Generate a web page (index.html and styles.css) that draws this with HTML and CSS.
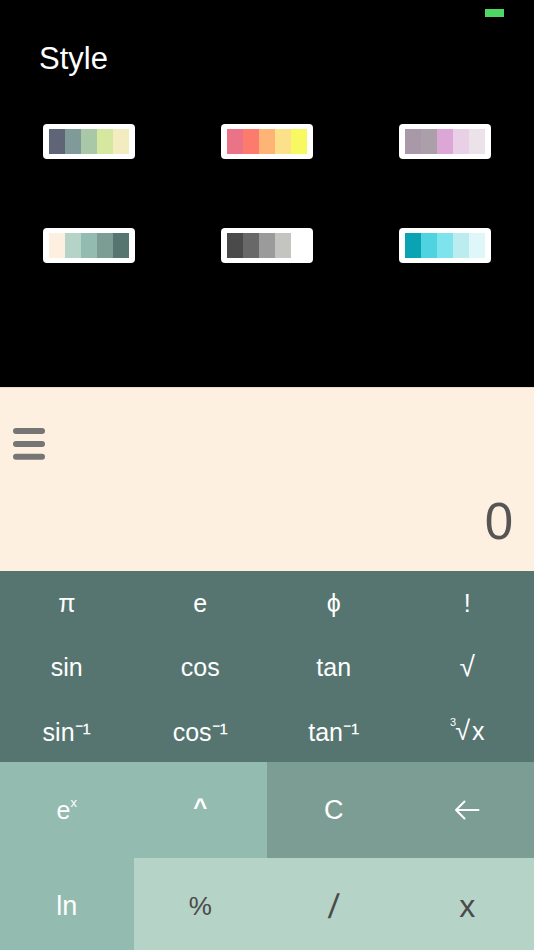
FILE: index.html
```html
<!DOCTYPE html>
<html>
<head>
<meta charset="utf-8">
<link rel="stylesheet" href="styles.css">
</head>
<body>
<div class="app">
  <section class="style-panel">
    <div class="status-bar"><span class="battery"></span></div>
    <h1 class="title">Style</h1>
    <div class="palettes">
      <div class="palette-cell"><div class="palette">
        <span class="sw" style="background:#5f6577"></span><span class="sw" style="background:#7f9a98"></span><span class="sw" style="background:#a8c8a8"></span><span class="sw" style="background:#d6e8a0"></span><span class="sw" style="background:#f2ecc0"></span>
      </div></div>
      <div class="palette-cell"><div class="palette">
        <span class="sw" style="background:#ea7387"></span><span class="sw" style="background:#fd7b6c"></span><span class="sw" style="background:#fdb474"></span><span class="sw" style="background:#fde08a"></span><span class="sw" style="background:#f8f860"></span>
      </div></div>
      <div class="palette-cell"><div class="palette">
        <span class="sw" style="background:#a898a8"></span><span class="sw" style="background:#aba0aa"></span><span class="sw" style="background:#dca6d6"></span><span class="sw" style="background:#ead0e6"></span><span class="sw" style="background:#ece2ea"></span>
      </div></div>
      <div class="palette-cell"><div class="palette">
        <span class="sw" style="background:#fdf0e1"></span><span class="sw" style="background:#b6d3c7"></span><span class="sw" style="background:#93bbb0"></span><span class="sw" style="background:#7c9d93"></span><span class="sw" style="background:#567570"></span>
      </div></div>
      <div class="palette-cell"><div class="palette">
        <span class="sw" style="background:#4a4a4a"></span><span class="sw" style="background:#686868"></span><span class="sw" style="background:#9b9b9b"></span><span class="sw" style="background:#c4c4c0"></span><span class="sw" style="background:#ffffff"></span>
      </div></div>
      <div class="palette-cell"><div class="palette">
        <span class="sw" style="background:#0aa3b4"></span><span class="sw" style="background:#4fd3e0"></span><span class="sw" style="background:#7fe3ee"></span><span class="sw" style="background:#bbecf0"></span><span class="sw" style="background:#e0f7fa"></span>
      </div></div>
    </div>
  </section>

  <section class="display">
    <svg class="menu" width="32" height="32" viewBox="0 0 32 32">
      <rect x="0" y="0" width="32" height="6" rx="3" fill="#757575"/>
      <rect x="0" y="13" width="32" height="6" rx="3" fill="#757575"/>
      <rect x="0" y="25.7" width="32" height="6" rx="3" fill="#757575"/>
    </svg>
    <div class="result">0</div>
  </section>

  <section class="keypad">
    <div class="key sci">π</div>
    <div class="key sci">e</div>
    <div class="key sci">ϕ</div>
    <div class="key sci">!</div>
    <div class="key sci">sin</div>
    <div class="key sci">cos</div>
    <div class="key sci">tan</div>
    <div class="key sci root">√</div>
    <div class="key sci">sin⁻¹</div>
    <div class="key sci">cos⁻¹</div>
    <div class="key sci">tan⁻¹</div>
    <div class="key sci cube"><span class="cube-idx">3</span><span class="cube-rad">√</span><span class="cube-x">x</span></div>
    <div class="key fn">e<sup class="exp">x</sup></div>
    <div class="key fn caret">^</div>
    <div class="key ctl clear">C</div>
    <div class="key ctl">
      <svg class="arrow" width="26" height="20" viewBox="0 0 26 20">
        <path d="M24.5 10 H2 M10.5 1.5 L2 10 L10.5 18.5" fill="none" stroke="#fff" stroke-width="2" stroke-linecap="round" stroke-linejoin="round"/>
      </svg>
    </div>
    <div class="key fn big">ln</div>
    <div class="key op pct">%</div>
    <div class="key op slash"><span class="slash-glyph">/</span></div>
    <div class="key op times">x</div>
  </section>
</div>
</body>
</html>
```

FILE: styles.css
```css
html, body {
  margin: 0;
  padding: 0;
  background: #000;
}
body {
  width: 534px;
  height: 950px;
  overflow: hidden;
  font-family: "Liberation Sans", Arial, sans-serif;
}
.app {
  display: flex;
  flex-direction: column;
}
.style-panel {
  height: 387px;
  background: #000;
  display: flex;
  flex-direction: column;
}
.status-bar {
  height: 26px;
  box-sizing: border-box;
  padding: 9px 30px 0 0;
  display: flex;
  justify-content: flex-end;
}
.battery {
  width: 19px;
  height: 8px;
  background: #4cd964;
}
.title {
  margin: 15px 0 0 0;
  padding-left: 39px;
  font-size: 31px;
  line-height: 36px;
  font-weight: normal;
  color: #fff;
}
.palettes {
  margin-top: 47px;
  display: grid;
  grid-template-columns: repeat(3, 1fr);
  grid-auto-rows: 35px;
  row-gap: 69px;
}
.palette-cell {
  display: flex;
  justify-content: center;
}
.palette {
  width: 92px;
  height: 35px;
  box-sizing: border-box;
  padding: 5px 6px;
  background: #fff;
  border-radius: 4px;
  display: flex;
}
.sw {
  flex: 1;
  height: 100%;
}
.display {
  height: 184px;
  box-sizing: border-box;
  background: #fdf0e1;
  border-top: 1px solid #e8dccd;
  padding: 40px 21px 19px 13px;
  display: flex;
  flex-direction: column;
}
.menu {
  display: block;
}
.result {
  margin-top: 32px;
  text-align: right;
  font-size: 51px;
  line-height: 60px;
  color: #555;
}
.keypad {
  display: grid;
  grid-template-columns: repeat(4, 1fr);
  grid-template-rows: 64px 64px 63px 96px 96px;
}
.key {
  display: flex;
  align-items: center;
  justify-content: center;
  font-size: 25px;
  color: #fff;
}
.sci {
  background: #567570;
}
.fn {
  background: #93bbb0;
}
.ctl {
  background: #7c9d93;
}
.op {
  background: #b6d3c7;
  color: #4a4a4a;
}
.root {
  font-size: 28px;
}
.cube {
  align-items: baseline;
  padding-top: 17px;
  box-sizing: border-box;
}
.cube-idx {
  font-size: 11px;
  position: relative;
  top: -14px;
  margin-right: -1px;
}
.cube-rad {
  font-size: 27px;
}
.cube-x {
  margin-left: 2px;
}
.exp {
  font-size: 13px;
  align-self: flex-start;
  margin-top: 33px;
}
.caret {
  font-weight: bold;
  font-size: 24px;
  padding-bottom: 6px;
}
.clear {
  font-size: 27px;
}
.big {
  font-size: 27px;
}
.pct {
  font-size: 26px;
}
.slash {
  font-size: 34px;
}
.slash-glyph {
  display: inline-block;
  transform: skewX(-6deg);
}
.times {
  font-size: 32px;
}
.arrow {
  display: block;
}
```
